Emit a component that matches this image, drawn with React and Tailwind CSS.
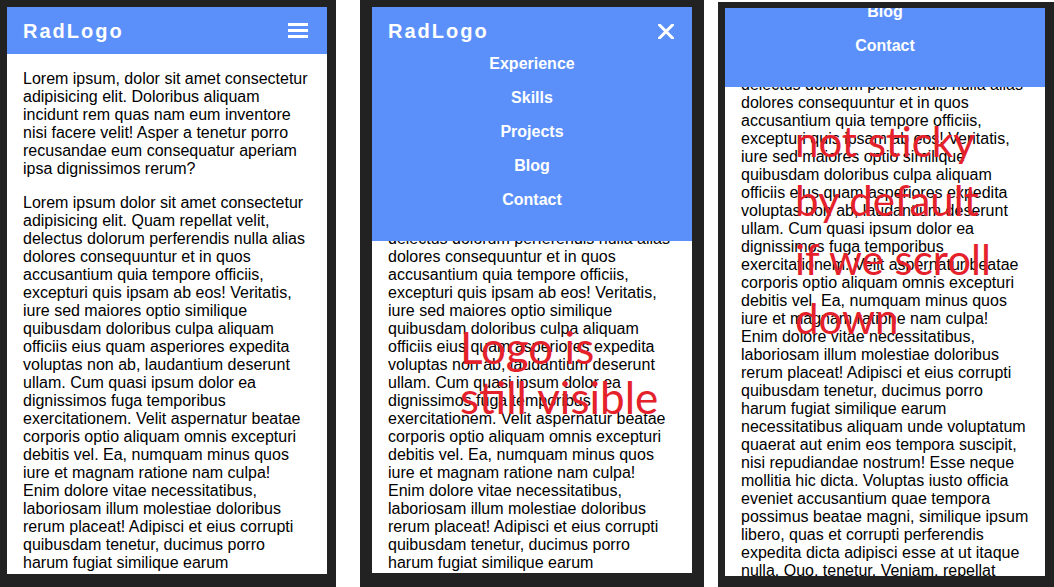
import React from 'react';

const PARA_ONE =
  'Lorem ipsum, dolor sit amet consectetur adipisicing elit. Doloribus aliquam incidunt rem quas nam eum inventore nisi facere velit! Asper a tenetur porro recusandae eum consequatur aperiam ipsa dignissimos rerum?';

const PARA_TWO =
  'Lorem ipsum dolor sit amet consectetur adipisicing elit. Quam repellat velit, delectus dolorum perferendis nulla alias dolores consequuntur et in quos accusantium quia tempore officiis, excepturi quis ipsam ab eos! Veritatis, iure sed maiores optio similique quibusdam doloribus culpa aliquam officiis eius quam asperiores expedita voluptas non ab, laudantium deserunt ullam. Cum quasi ipsum dolor ea dignissimos fuga temporibus exercitationem. Velit aspernatur beatae corporis optio aliquam omnis excepturi debitis vel. Ea, numquam minus quos iure et magnam ratione nam culpa! Enim dolore vitae necessitatibus, laboriosam illum molestiae doloribus rerum placeat! Adipisci et eius corrupti quibusdam tenetur, ducimus porro harum fugiat similique earum necessitatibus aliquam unde voluptatum quaerat aut enim eos tempora suscipit, nisi repudiandae nostrum! Esse neque mollitia hic dicta. Voluptas iusto officia eveniet accusantium quae tempora possimus beatae magni, similique ipsum libero, quas et corrupti perferendis expedita dicta adipisci esse at ut itaque nulla. Quo, tenetur. Veniam, repellat quibusdam nemo sint eligendi.';

const links = ['Experience', 'Skills', 'Projects', 'Blog', 'Contact'];

const Logo = () => (
  <span className="text-[20px] leading-[24px] font-bold tracking-[2px] text-white">RadLogo</span>
);

const Burger = () => (
  <div className="flex flex-col gap-[3px]">
    <span className="block w-5 h-[3px] bg-white" />
    <span className="block w-5 h-[3px] bg-white" />
    <span className="block w-5 h-[3px] bg-white" />
  </div>
);

const CloseIcon = () => (
  <svg width="16" height="15" viewBox="0 0 16 15">
    <path d="M1.5 1 L14.5 14 M14.5 1 L1.5 14" stroke="white" strokeWidth="3" strokeLinecap="square" />
  </svg>
);

// page content under the header
const Content = () => (
  <div className="px-4 text-[16px] leading-[18px] text-black">
    <p className="my-4">{PARA_ONE}</p>
    <p className="my-4">{PARA_TWO}</p>
  </div>
);

// expanded mobile menu, drawn over the content
const OpenMenu = () => (
  <div className="absolute top-0 left-0 right-0 h-[234px] bg-[#5b90fa]">
    <div className="flex items-center justify-between pl-4 pr-[18px] pt-[12px] h-[36px]">
      <Logo />
      <CloseIcon />
    </div>
    <ul className="mt-[12px] flex flex-col items-center gap-4">
      {links.map((link) => (
        <li key={link} className="text-white font-bold text-[16px] leading-[18px]">
          {link}
        </li>
      ))}
    </ul>
  </div>
);

const Screen = ({ open, scrolled, children }) => (
  <div className="relative h-full overflow-hidden bg-white font-['Liberation_Sans',Arial,sans-serif]">
    <div className={scrolled ? 'relative -mt-[155px]' : 'relative'}>
      <header className="flex items-center justify-between h-[47px] pl-4 pr-[19px] bg-[#5b90fa]">
        <Logo />
        <Burger />
      </header>
      <Content />
      {open && <OpenMenu />}
    </div>
    {children}
  </div>
);

const App = () => {
  return (
    <div className="flex w-[1054px] h-[587px] bg-white overflow-hidden">
      <div className="w-[336px] h-[587px] shrink-0 bg-[#222222] pl-[7px] pr-[9px] pt-[7px] pb-[13px]">
        <Screen />
      </div>

      <div className="ml-[24px] w-[344px] h-[587px] shrink-0 bg-[#222222] px-[12px] pt-[7px] pb-[14px]">
        <Screen open>
          <div className="absolute left-[88px] top-[315px] font-['Lato',sans-serif] text-[44px] leading-[50px] text-[#e5222b]">
            <div>Logo is</div>
            <div>still visible</div>
          </div>
        </Screen>
      </div>

      <div className="ml-[14px] mt-[2px] w-[336px] h-[585px] shrink-0 bg-[#222222] pl-[7px] pr-[9px] pt-[6px] pb-[11px]">
        <Screen open scrolled>
          <div className="absolute left-[70px] top-[104px] font-['Lato',sans-serif] text-[42px] leading-[59px] text-[#e5222b]">
            <div>not sticky</div>
            <div>by default</div>
            <div>if we scroll</div>
            <div>down</div>
          </div>
        </Screen>
      </div>
    </div>
  );
};

export default App;
